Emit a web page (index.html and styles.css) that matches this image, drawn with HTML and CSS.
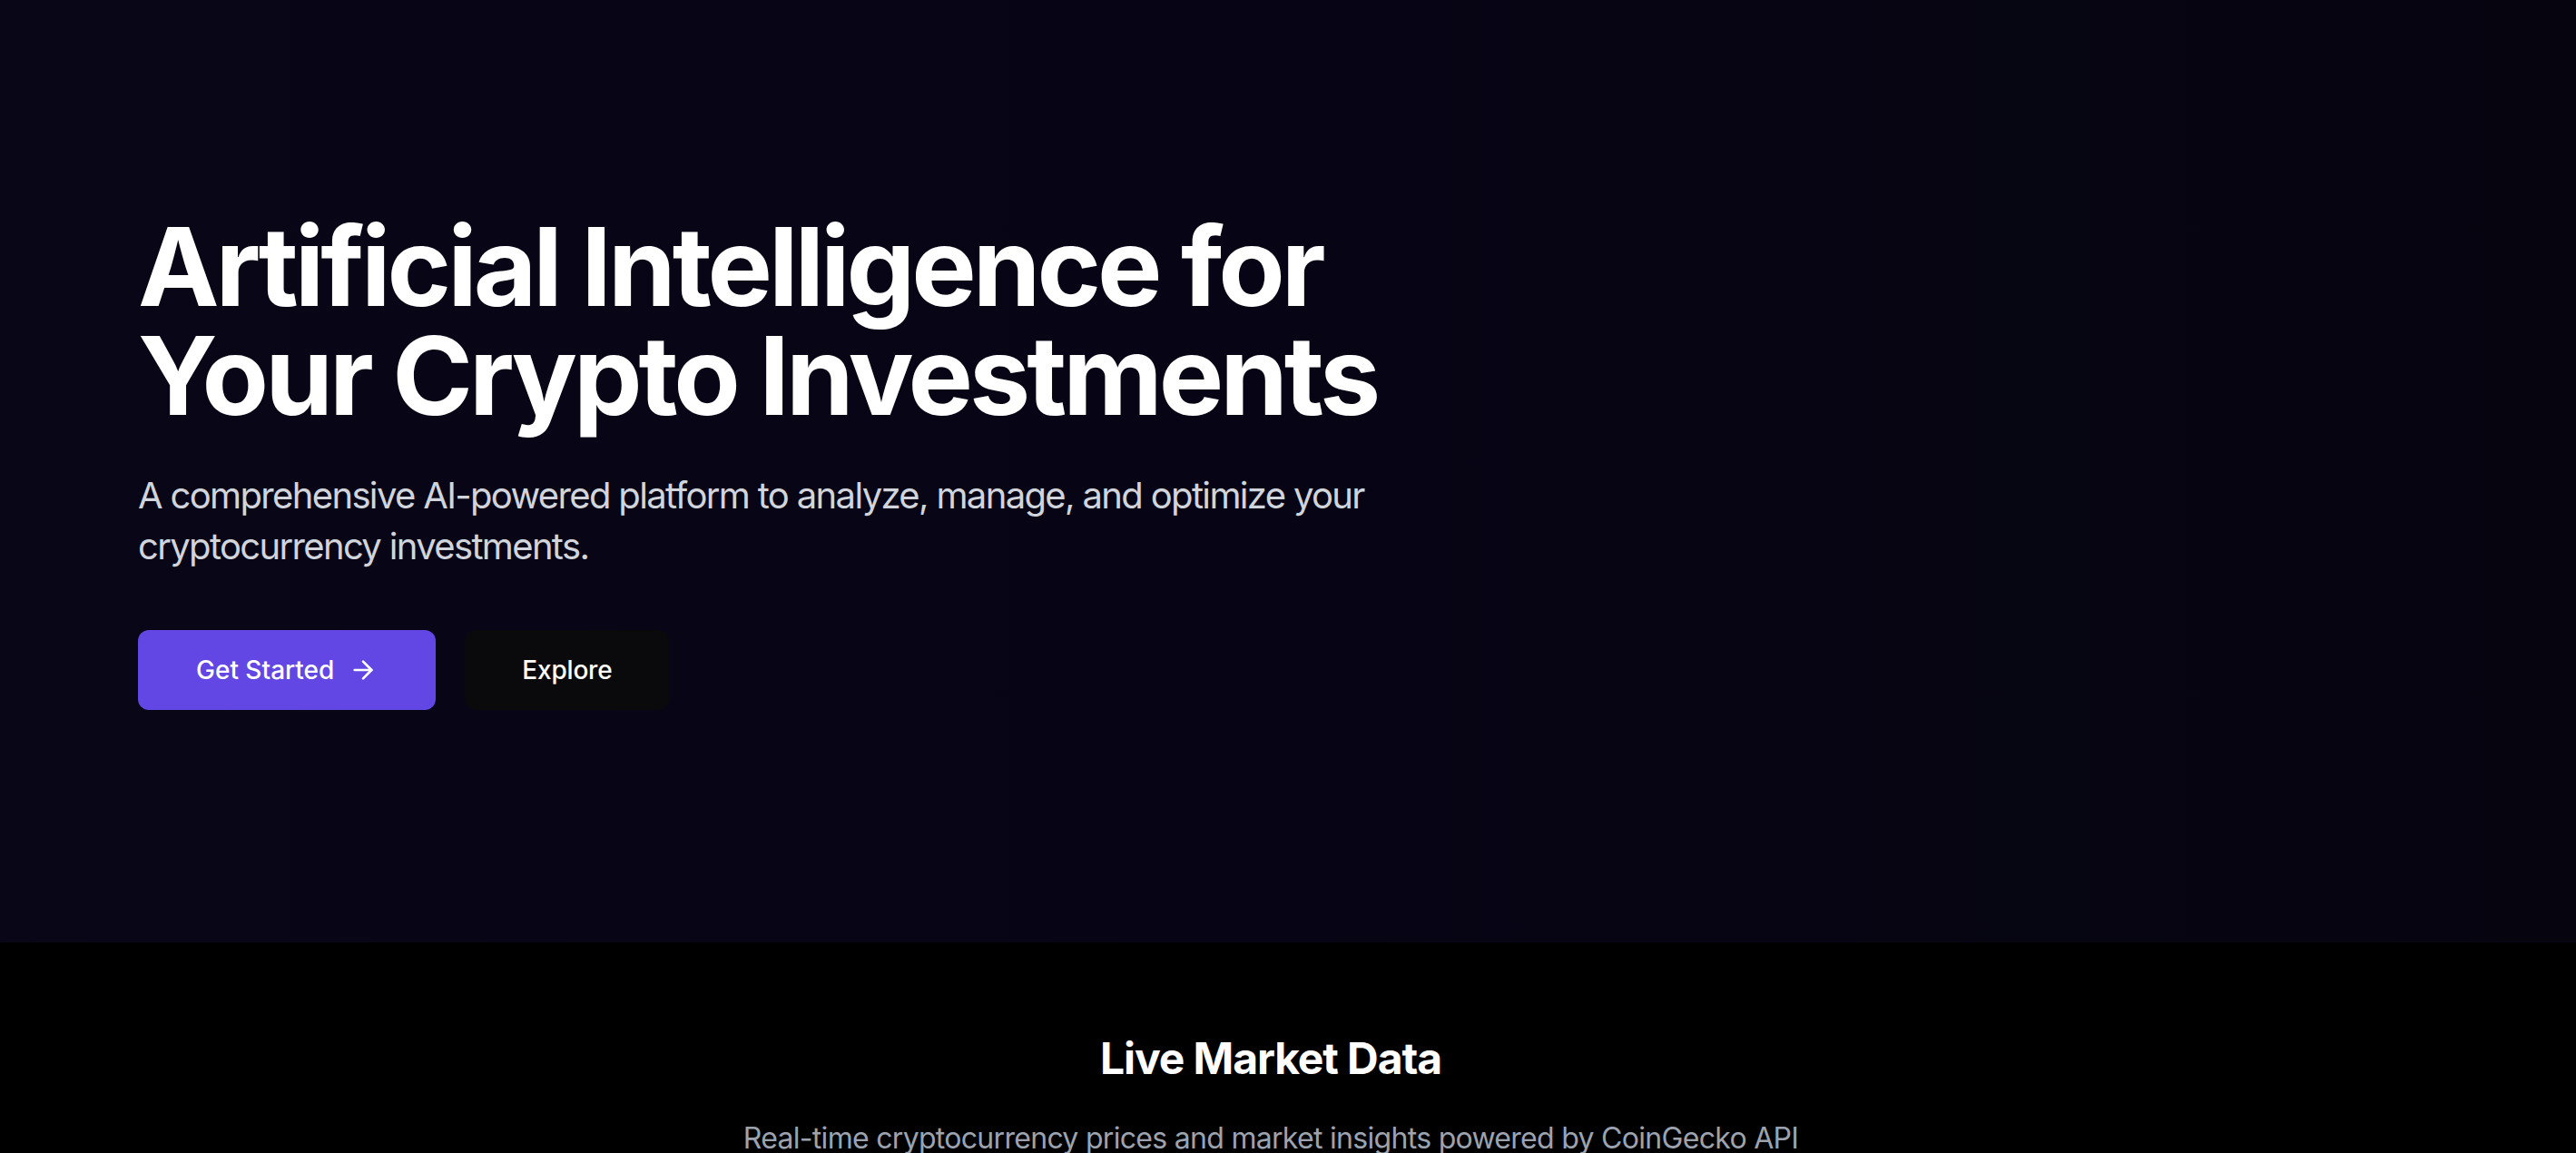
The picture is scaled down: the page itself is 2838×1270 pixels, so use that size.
FILE: index.html
```html
<!DOCTYPE html>
<html lang="en">
<head>
<meta charset="utf-8">
<title>AI Crypto</title>
<link rel="stylesheet" href="styles.css">
</head>
<body>
  <section class="hero">
    <div class="hero-inner">
      <h1 class="hero-title">Artificial Intelligence for Your Crypto Investments</h1>
      <p class="hero-text">A comprehensive AI-powered platform to analyze, manage, and optimize your cryptocurrency investments.</p>
      <div class="hero-actions">
        <a class="btn btn-primary" href="#">Get Started
          <svg class="btn-icon" viewBox="0 0 24 24" fill="none" stroke="currentColor" stroke-width="2" stroke-linecap="round" stroke-linejoin="round"><path d="M5 12h14"/><path d="m12 5 7 7-7 7"/></svg>
        </a>
        <a class="btn btn-dark" href="#">Explore</a>
      </div>
    </div>
  </section>
  <section class="market">
    <h2 class="market-title">Live Market Data</h2>
    <p class="market-text">Real-time cryptocurrency prices and market insights powered by CoinGecko API</p>
  </section>
</body>
</html>
```
FILE: styles.css
```css
* { box-sizing: border-box; }
html, body { margin: 0; padding: 0; }
body {
  font-family: Inter, "Noto Sans", sans-serif;
  background: #000;
  color: #fff;
  overflow: hidden;
}
.hero {
  height: 1038px;
  background: linear-gradient(to right, #090717 0%, #070515 50%, #05040f 100%);
  padding: 234px 0 0 152px;
}
.hero-inner { max-width: 1536px; }
.hero-title {
  margin: 0 0 44px;
  font-size: 120px;
  line-height: 120px;
  font-weight: 700;
  letter-spacing: -4px;
  color: #fff;
}
.hero-text {
  margin: 0 0 64px;
  font-size: 40px;
  line-height: 56px;
  letter-spacing: -1.65px;
  color: #d1d5db;
}
.hero-actions { display: flex; gap: 32px; }
.btn {
  display: inline-flex;
  align-items: center;
  gap: 16px;
  height: 88px;
  padding: 0 64px;
  border-radius: 12px;
  font-size: 28px;
  line-height: 40px;
  font-weight: 500;
  color: #fff;
  text-decoration: none;
}
.btn-primary { background: #6247e5; }
.btn-dark { background: #0a0a0c; padding: 0 63px; letter-spacing: -0.2px; }
.btn-icon { width: 32px; height: 32px; }
.market {
  padding: 96px 38px 0 0;
  text-align: center;
}
.market-title {
  margin: 0 0 32px;
  font-size: 48px;
  line-height: 64px;
  font-weight: 700;
  letter-spacing: -1.1px;
}
.market-text {
  margin: 0;
  font-size: 32px;
  line-height: 48px;
  letter-spacing: -0.7px;
  color: #9ca3af;
}
```
